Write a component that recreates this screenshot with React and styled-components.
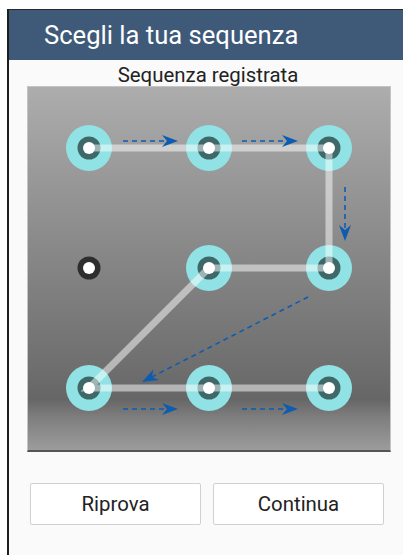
import React from "react";
import styled, { createGlobalStyle } from "styled-components";

const GlobalStyle = createGlobalStyle`
    html, body {
        margin: 0;
        padding: 0;
        background: #ffffff;
        font-family: Roboto, "Liberation Sans", sans-serif;
    }
`;

const Device = styled.div`
    width: 403px;
    height: 555px;
    padding: 9px 0 0 7px;
    box-sizing: border-box;
    background: #ffffff;
    overflow: hidden;
`;

const Screen = styled.div`
    height: 100%;
    border-left: 2px solid #1e1e1e;
    border-top: 1px solid #2a2a2a;
    background: #fafafa;
    display: flex;
    flex-direction: column;
`;

const Header = styled.div`
    height: 50px;
    background: #3e5a78;
    color: #ffffff;
    font-size: 25.6px;
    display: flex;
    align-items: center;
    padding-left: 35px;
    flex-shrink: 0;
`;

const Subtitle = styled.div`
    text-align: center;
    font-size: 20.4px;
    color: #222222;
    height: 26px;
    line-height: 30px;
    padding-left: 4px;
`;

const Board = styled.div`
    align-self: center;
    margin-left: 5px;
    width: 362px;
    height: 363px;
    border: 1px solid #c4c4c4;
    border-bottom: 2px solid #555555;
    background: linear-gradient(
        to bottom,
        #adadad 0%,
        #8c8c8c 40%,
        #6e6e6e 78%,
        #666666 86%,
        #7e7e7e 91%,
        #9c9c9c 100%
    );
`;

const Buttons = styled.div`
    display: flex;
    justify-content: center;
    gap: 12px;
    margin-top: 31px;
    padding-left: 2px;
`;

const Button = styled.button`
    width: 171px;
    height: 42px;
    background: #ffffff;
    border: 1px solid #d0d0d0;
    border-radius: 2px;
    font-family: Roboto, "Liberation Sans", sans-serif;
    font-size: 20.4px;
    color: #222222;
    padding: 0;
`;

const SPACING = 120;
const OFFSET = 61;
const pos = (c) => OFFSET + c * SPACING;

// order the pattern was drawn in, as [col, row]
const pattern = [
    [0, 0],
    [1, 0],
    [2, 0],
    [2, 1],
    [1, 1],
    [0, 2],
    [1, 2],
    [2, 2],
];

const arrows = [
    [95, 54, 150, 54],
    [214, 54, 270, 54],
    [317, 100, 317, 154],
    [280, 210, 114, 295],
    [95, 322, 150, 322],
    [214, 322, 270, 322],
];

const Arrow = ({ x1, y1, x2, y2 }) => {
    const angle = (Math.atan2(y2 - y1, x2 - x1) * 180) / Math.PI;
    const len = Math.hypot(x2 - x1, y2 - y1);
    return (
        <g transform={`translate(${x1} ${y1}) rotate(${angle})`}>
            <line
                x1="0"
                y1="0"
                x2={len - 10}
                y2="0"
                stroke="#0d5cb0"
                strokeWidth="1.6"
                strokeDasharray="5 4"
            />
            <path
                d={`M${len} 0 L${len - 16} -6 L${len - 11} 0 L${len - 16} 6 Z`}
                fill="#0d5cb0"
            />
        </g>
    );
};

const PatternDrawing = () => {
    const used = pattern.map(([c, r]) => `${c}-${r}`);
    const points = pattern.map(([c, r]) => `${pos(c)},${pos(r)}`).join(" ");
    const dots = [];
    for (let r = 0; r < 3; r++) {
        for (let c = 0; c < 3; c++) {
            dots.push({ c, r, on: used.includes(`${c}-${r}`) });
        }
    }
    return (
        <svg width="362" height="363" viewBox="0 0 362 363">
            {dots
                .filter((d) => d.on)
                .map((d) => (
                    <circle
                        key={`o${d.c}${d.r}`}
                        cx={pos(d.c)}
                        cy={pos(d.r)}
                        r="23"
                        fill="#90e2e5"
                    />
                ))}
            {dots.map((d) => (
                <circle
                    key={`i${d.c}${d.r}`}
                    cx={pos(d.c)}
                    cy={pos(d.r)}
                    r="11.5"
                    fill={d.on ? "#3f6868" : "#2e2e2e"}
                />
            ))}
            <polyline
                points={points}
                fill="none"
                stroke="#ffffff"
                strokeOpacity="0.5"
                strokeWidth="7"
                strokeLinejoin="miter"
            />
            {dots.map((d) => (
                <circle
                    key={`c${d.c}${d.r}`}
                    cx={pos(d.c)}
                    cy={pos(d.r)}
                    r="6"
                    fill="#ffffff"
                />
            ))}
            {arrows.map(([x1, y1, x2, y2], i) => (
                <Arrow key={i} x1={x1} y1={y1} x2={x2} y2={y2} />
            ))}
        </svg>
    );
};

const App = () => {
    return (
        <Device>
            <GlobalStyle />
            <Screen>
                <Header>Scegli la tua sequenza</Header>
                <Subtitle>Sequenza registrata</Subtitle>
                <Board>
                    <PatternDrawing />
                </Board>
                <Buttons>
                    <Button>Riprova</Button>
                    <Button>Continua</Button>
                </Buttons>
            </Screen>
        </Device>
    );
};

export default App;
